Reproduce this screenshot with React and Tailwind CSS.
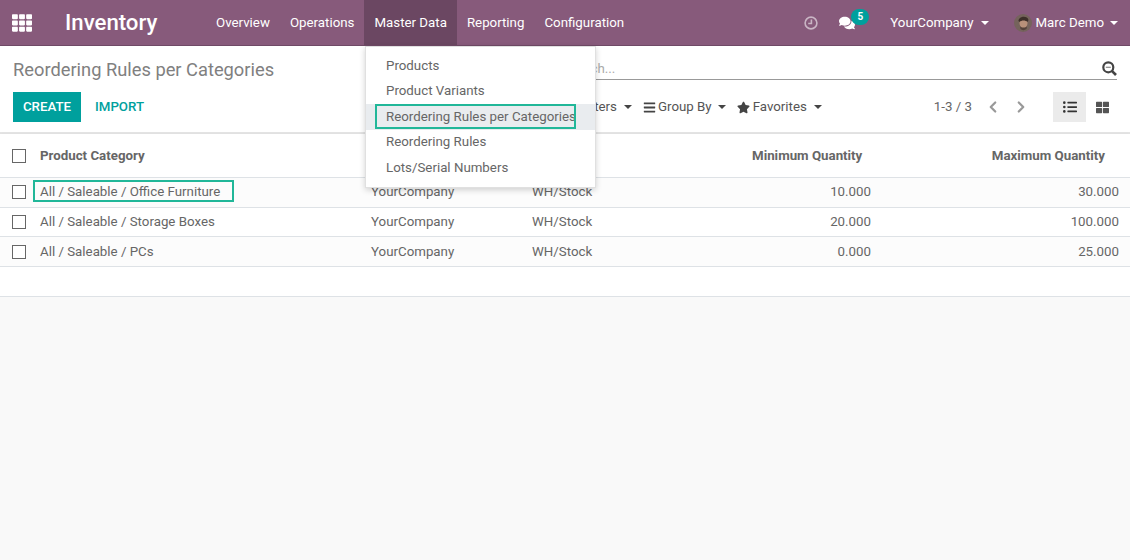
import { ChevronLeft, ChevronRight } from 'lucide-react'
import { FaBars, FaStar, FaComments, FaThLarge, FaListUl, FaTh } from 'react-icons/fa'

const NAV = ['Overview', 'Operations', 'Master Data', 'Reporting', 'Configuration']
const MENU = ['Products', 'Product Variants', 'Reordering Rules per Categories', 'Reordering Rules', 'Lots/Serial Numbers']
const ROWS = [
  { cat: 'All / Saleable / Office Furniture', min: '10.000', max: '30.000' },
  { cat: 'All / Saleable / Storage Boxes', min: '20.000', max: '100.000' },
  { cat: 'All / Saleable / PCs', min: '0.000', max: '25.000' },
]

function Caret({ className }) {
  return <span className={`inline-block w-0 h-0 border-x-[4px] border-x-transparent border-t-[4px] ${className}`} />
}

function Check() {
  return <span className="block w-[14px] h-[14px] border border-[#666] bg-white" />
}

function ClockIcon() {
  return (
    <svg width="14" height="14" viewBox="0 0 14 14" fill="none" stroke="#c9b5c4" strokeWidth="1.6">
      <circle cx="7" cy="7" r="5.9" />
      <path d="M7.4 3.5v4H4.2" />
    </svg>
  )
}

function SearchIcon() {
  return (
    <svg width="15" height="15" viewBox="0 0 15 15" fill="none">
      <circle cx="6.3" cy="6.3" r="5" stroke="#444" strokeWidth="2.2" />
      <path d="M9.800 9.800l4.200 4.200" stroke="#444" strokeWidth="2.6" />
      <path d="M3.800 6.300h5" stroke="#888" strokeWidth="1.2" />
    </svg>
  )
}

function Avatar() {
  return (
    <svg width="18" height="18" viewBox="0 0 18 18">
      <circle cx="9" cy="9" r="9" fill="#75635c" />
      <ellipse cx="9.500" cy="9" rx="4" ry="5.200" fill="#b8917a" />
      <path d="M4.500 7c0-5 9-6 10-1l-1 2c-2-2-6-2-8 0z" fill="#3d2f29" />
      <path d="M6 12c1 2 6 2 7 0l-.5 3c-2 1.500-4.500 1.500-6 0z" fill="#54423a" />
    </svg>
  )
}

export default function App() {
  return (
    <div className="relative w-[1130px] h-[560px] overflow-hidden bg-white font-['Roboto',sans-serif] text-[13.3px] text-[#666]">
      <header className="flex items-center h-[46px] bg-[#875a7b] border-b border-[#6f4a66] text-white">
        <FaTh size={20} className="ml-[12px] text-white" />
        <span className="ml-[33px] w-[93px] text-[22.2px] font-medium leading-none whitespace-nowrap">Inventory</span>
        <nav className="flex ml-[48px] h-[45px]">
          {NAV.map((n) => (
            <span key={n} className={`flex items-center px-[10px] whitespace-nowrap ${n === 'Master Data' ? 'bg-[#6b4762]' : ''}`}>{n}</span>
          ))}
        </nav>
        <div className="flex items-center ml-auto h-full">
          <ClockIcon />
          <span className="relative ml-[21px] w-[16px]">
            <FaComments size={16} />
            <span className="absolute left-[12px] top-[-6px] flex items-center justify-center w-[18px] h-[16px] rounded-full bg-[#00a09d] text-[10px] font-bold">5</span>
          </span>
          <span className="ml-[35px] whitespace-nowrap">YourCompany</span>
          <Caret className="ml-[8px] border-t-white" />
          <span className="ml-[25px]"><Avatar /></span>
          <span className="ml-[3px] whitespace-nowrap">Marc Demo</span>
          <Caret className="ml-[6px] mr-[12px] border-t-white" />
        </div>
      </header>

      <section className="h-[88px] border-b-2 border-[#e4e4e4] pl-[13px] pr-[11px] pt-[12px]">
        <div className="flex items-start">
          <h1 className="w-[551px] text-[18.3px] leading-[24px] text-[#808080] whitespace-nowrap">Reordering Rules per Categories</h1>
          <div className="flex items-center justify-between w-[553px] h-[22px] border-b border-[#999]">
            <span className="text-[#aaa]">Search...</span>
            <SearchIcon />
          </div>
        </div>
        <div className="flex items-center h-[30px] mt-[10px]">
          <button className="w-[68px] h-[30px] bg-[#00a09d] text-white font-medium">CREATE</button>
          <span className="ml-[14px] w-[62px] text-[#00a09d] font-medium">IMPORT</span>
          <span className="ml-[418px] w-[42px] text-right text-[#555] whitespace-nowrap">Filters</span>
          <Caret className="ml-[7px] border-t-[#444]" />
          <FaBars size={13} className="ml-[11px] text-[#444]" />
          <span className="ml-[2px] text-[#555] whitespace-nowrap">Group By</span>
          <Caret className="ml-[6px] border-t-[#444]" />
          <FaStar size={13} className="ml-[11px] text-[#444]" />
          <span className="ml-[3px] text-[#555] whitespace-nowrap">Favorites</span>
          <Caret className="ml-[7px] border-t-[#444]" />
          <span className="ml-[112px] whitespace-nowrap">1-3 / 3</span>
          <ChevronLeft size={18} strokeWidth={3} className="ml-[12px] text-[#999]" />
          <ChevronRight size={18} strokeWidth={3} className="ml-[10px] text-[#999]" />
          <span className="flex items-center justify-center ml-[23px] w-[33px] h-[30px] bg-[#ebebeb]"><FaListUl size={14} className="text-[#333]" /></span>
          <span className="flex items-center justify-center w-[33px] h-[30px]"><FaThLarge size={13} className="text-[#555]" /></span>
        </div>
      </section>

      <div className="flex items-center h-[44px] border-b border-[#dee2e6] shadow-[0_1px_3px_rgba(0,0,0,0.08)] font-bold">
        <span className="ml-[12px] w-[28px]"><Check /></span>
        <span className="w-[712px]">Product Category</span>
        <span className="w-[109px] text-right whitespace-nowrap">Minimum Quantity</span>
        <span className="w-[244px] text-right whitespace-nowrap">Maximum Quantity</span>
      </div>
      {ROWS.map((r, i) => (
        <div key={r.cat} className={`flex items-center h-[29.7px] border-b border-[#dee2e6] ${i === 1 ? 'bg-white' : 'bg-[#fcfcfc]'}`}>
          <span className="ml-[12px] w-[28px]"><Check /></span>
          <span className={`w-[331px] ${i === 0 ? 'relative' : ''}`}>
            {r.cat}
            {i === 0 && <span className="absolute left-[-7px] top-[-2px] w-[201px] h-[22px] border-2 border-[#21b799]" />}
          </span>
          <span className="w-[161px]">YourCompany</span>
          <span className="w-[339px] flex justify-between"><span>WH/Stock</span><span>{r.min}</span></span>
          <span className="w-[248px] text-right">{r.max}</span>
        </div>
      ))}
      <div className="h-[29.7px] border-b border-[#dee2e6]" />
      <div className="h-[264px] bg-[#f9f9f9]" />

      <div className="absolute left-[365px] top-[46px] w-[231px] h-[142px] bg-white border border-[#e0e0e0] shadow-[0_2px_6px_rgba(0,0,0,0.18)] pt-[6px]">
        {MENU.map((m, i) => (
          <div key={m} className={`relative flex items-center h-[25.5px] pl-[20px] whitespace-nowrap ${i === 2 ? 'bg-[#e9ecef]' : ''}`}>
            {m}
            {i === 2 && <span className="absolute left-[9px] top-0 w-[201px] h-[25px] border-2 border-[#21b799]" />}
          </div>
        ))}
      </div>
    </div>
  )
}
